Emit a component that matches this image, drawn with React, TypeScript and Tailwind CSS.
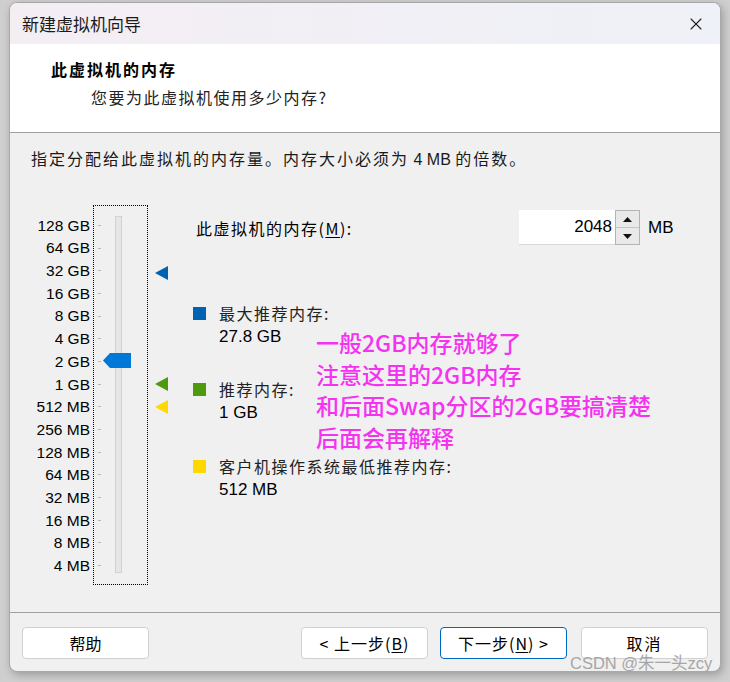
import { X } from 'lucide-react'

const scale = [
  '128 GB', '64 GB', '32 GB', '16 GB', '8 GB', '4 GB', '2 GB', '1 GB',
  '512 MB', '256 MB', '128 MB', '64 MB', '32 MB', '16 MB', '8 MB', '4 MB',
]

// marker rows on the scale: index -> colour
const markers: Record<number, string> = { 2: '#0063b1', 7: '#4e9a0c', 8: '#ffd800' }

const legend = [
  { color: 'bg-[#0063b1]', label: '最大推荐内存:', value: '27.8 GB', gap: 'mt-[56px]' },
  { color: 'bg-[#4e9a0c]', label: '推荐内存:', value: '1 GB', gap: 'mt-[28px]' },
  { color: 'bg-[#ffd800]', label: '客户机操作系统最低推荐内存:', value: '512 MB', gap: 'mt-[29px]' },
]

const cjk = "font-['Noto_Sans_CJK_SC',sans-serif]"
const latin = "font-['Liberation_Sans','Noto_Sans_CJK_SC',sans-serif]"

function Triangle({ color }: { color: string }) {
  return (
    <svg width="13" height="14" viewBox="0 0 13 14">
      <polygon points="13,0 13,14 0,7" fill={color} />
    </svg>
  )
}

export default function App() {
  return (
    <div className="relative h-[682px] w-[730px] overflow-hidden bg-[#cfcfcf] pl-[9px] pt-[2px]">
      <div className="flex h-[670px] w-[712px] flex-col overflow-hidden rounded-[8px] border border-[#a8a8a8] bg-[#f0f0f0] shadow-[2px_3px_8px_rgba(0,0,0,0.25)]">
        {/* Title bar */}
        <div className="flex h-[41px] shrink-0 items-center justify-between bg-gradient-to-r from-[#f4eef3] to-[#eef1f7] pl-[12px] pr-[14px]">
          <span className={`${cjk} text-[17px] text-[#1a1a1a]`}>新建虚拟机向导</span>
          <X className="h-[20px] w-[20px] text-[#222]" strokeWidth={1.3} />
        </div>

        {/* Header */}
        <div className={`${cjk} h-[88px] shrink-0 bg-white pl-[41px] pt-[14px] text-black`}>
          <div className="h-[22px] text-[16px] font-bold leading-[22px] tracking-[2px]">此虚拟机的内存</div>
          <div className="mt-[6px] h-[22px] pl-[40px] text-[16px] leading-[22px] tracking-[1.5px] text-[#222]">
            您要为此虚拟机使用多少内存?
          </div>
        </div>
        <div className="h-px shrink-0 bg-[#a0a0a0]" />

        {/* Body */}
        <div className="relative flex-1 pt-[14px]">
          <div className={`${cjk} h-[22px] pl-[21px] text-[16px] leading-[22px] tracking-[2px] text-[#1a1a1a]`}>
            指定分配给此虚拟机的内存量。内存大小必须为<span className={`${latin} tracking-normal`}> 4 MB </span>的倍数。
          </div>

          <div className="mt-[36px] flex items-start">
            {/* Scale labels */}
            <div className={`${latin} ml-[10px] w-[70px] pt-[9px] text-[15.5px] text-black`}>
              <div className="grid h-[363px] grid-rows-16">
                {scale.map((s) => (
                  <div key={s} className="flex items-center justify-end">
                    {s}
                  </div>
                ))}
              </div>
            </div>

            {/* Slider */}
            <div className="relative ml-[3px] flex h-[380px] w-[55px] border border-dotted border-black pt-[8px]">
              <div className="ml-[4px] grid h-[363px] w-[3px] grid-rows-16">
                {scale.map((s) => (
                  <div key={s} className="flex items-center">
                    <div className="h-px w-[3px] bg-[#b8b8b8]" />
                  </div>
                ))}
              </div>
              <div className="ml-[14px] mt-[2px] h-[357px] w-[7px] border border-[#d2d2d2] bg-[#e6e6e6]" />
              <svg className="absolute left-[9px] top-[147px]" width="28" height="15" viewBox="0 0 28 15">
                <polygon points="7,0 28,0 28,15 7,15 0,7.5" fill="#0078d7" />
              </svg>
            </div>

            {/* Markers */}
            <div className="ml-[7px] w-[14px] pt-[9px]">
              <div className="grid h-[363px] grid-rows-16">
                {scale.map((s, i) => (
                  <div key={s} className={i === 2 ? 'flex items-center pt-[5px]' : 'flex items-center'}>
                    {markers[i] && <Triangle color={markers[i]} />}
                  </div>
                ))}
              </div>
            </div>

            {/* Right panel */}
            <div className="ml-[24px] flex flex-col">
              <div className="mt-[5px] flex h-[35px] items-center">
                <div className={`${cjk} w-[326px] pl-[3px] text-[16px] tracking-[1.5px] text-black`}>
                  此虚拟机的内存(<span className="underline underline-offset-2">M</span>):
                </div>
                <div className="flex h-[35px] items-stretch">
                  <div className={`${latin} flex w-[96px] items-center justify-end border-b border-[#d8d8d8] bg-white pr-[3px] text-[17px] text-black`}>
                    2048
                  </div>
                  <div className="flex w-[25px] flex-col border border-[#b4b4b4] bg-[#e9e9e9]">
                    <div className="flex flex-1 items-center justify-center border-b border-[#c4c4c4]">
                      <svg width="9" height="5" viewBox="0 0 9 5"><polygon points="0,5 9,5 4.5,0" fill="#111" /></svg>
                    </div>
                    <div className="flex flex-1 items-center justify-center">
                      <svg width="9" height="5" viewBox="0 0 9 5"><polygon points="0,0 9,0 4.5,5" fill="#111" /></svg>
                    </div>
                  </div>
                  <div className={`${latin} ml-[8px] flex items-center text-[17px] text-black`}>MB</div>
                </div>
              </div>

              {legend.map((l) => (
                <div key={l.label} className={l.gap}>
                  <div className="flex h-[24px] items-center">
                    <div className={`h-[13px] w-[13px] ${l.color}`} />
                    <span className={`${cjk} ml-[13px] text-[16px] tracking-[1.5px] text-[#222]`}>{l.label}</span>
                  </div>
                  <div className={`${latin} flex h-[24px] items-center pl-[26px] text-[17px] text-black`}>{l.value}</div>
                </div>
              ))}
            </div>
          </div>

          {/* Annotation */}
          <div className={`${cjk} absolute left-[306px] top-[194px] text-[23px] font-medium leading-[31.5px] text-[#f433f0]`}>
            <div>一般2GB内存就够了</div>
            <div>注意这里的2GB内存</div>
            <div>和后面Swap分区的2GB要搞清楚</div>
            <div>后面会再解释</div>
          </div>
        </div>

        <div className="h-px shrink-0 bg-[#a0a0a0]" />

        {/* Footer */}
        <div className={`${cjk} flex h-[58px] shrink-0 items-start pl-[12px] pr-[12px] pt-[14px] text-[16px] text-black`}>
          <button className="flex h-[32px] w-[127px] items-center justify-center rounded-[4px] border border-[#d0d0d0] bg-white">
            帮助
          </button>
          <div className="ml-auto flex">
            <button className="flex h-[32px] w-[127px] items-center justify-center rounded-[4px] border border-[#d0d0d0] bg-white tracking-[1px]">
              &lt; 上一步(<span className="underline underline-offset-2">B</span>)
            </button>
            <button className="ml-[12px] flex h-[32px] w-[127px] items-center justify-center rounded-[4px] border border-[#0067c0] bg-white tracking-[1px]">
              下一步(<span className="underline underline-offset-2">N</span>) &gt;
            </button>
            <button className="ml-[14px] flex h-[32px] w-[127px] items-center justify-center rounded-[4px] border border-[#d0d0d0] bg-white tracking-[2px]">
              取消
            </button>
          </div>
        </div>
      </div>

      {/* Watermark */}
      <div className={`${latin} absolute left-[570px] top-[651px] text-[16.5px] text-[#a6a6a6]`}>CSDN @朱一头zcy</div>
    </div>
  )
}
